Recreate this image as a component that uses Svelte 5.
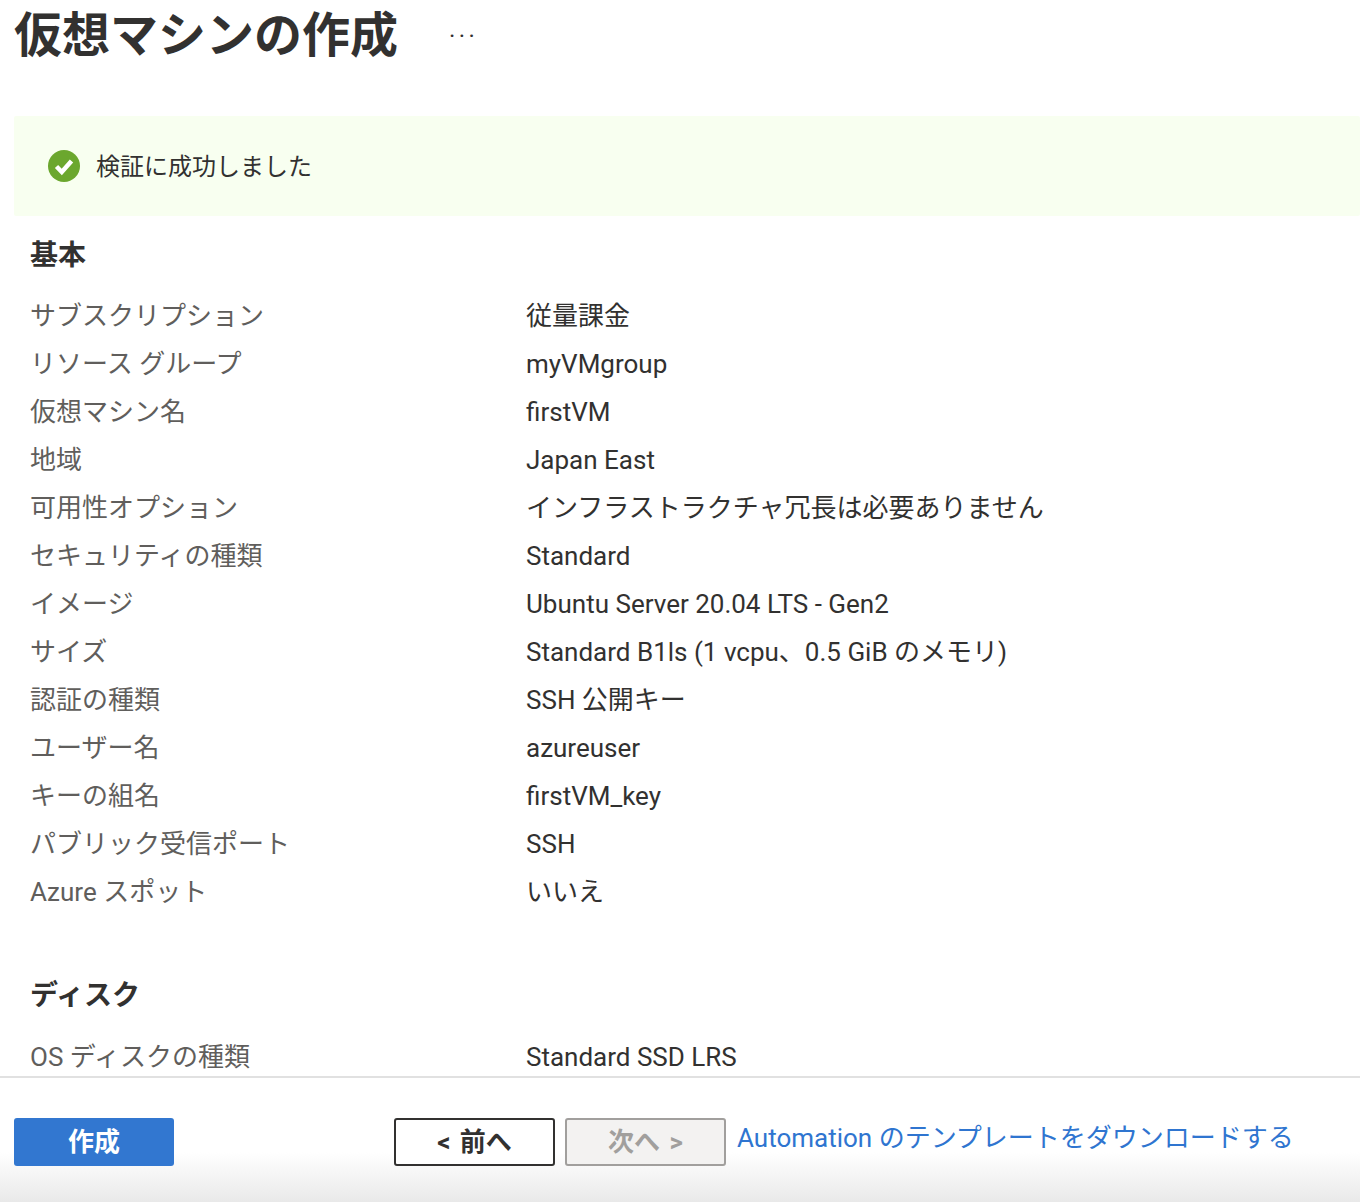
<script>
  const basics = [
    ['サブスクリプション', '従量課金'],
    ['リソース グループ', 'myVMgroup'],
    ['仮想マシン名', 'firstVM'],
    ['地域', 'Japan East'],
    ['可用性オプション', 'インフラストラクチャ冗長は必要ありません'],
    ['セキュリティの種類', 'Standard'],
    ['イメージ', 'Ubuntu Server 20.04 LTS - Gen2'],
    ['サイズ', 'Standard B1ls (1 vcpu、0.5 GiB のメモリ)'],
    ['認証の種類', 'SSH 公開キー'],
    ['ユーザー名', 'azureuser'],
    ['キーの組名', 'firstVM_key'],
    ['パブリック受信ポート', 'SSH'],
    ['Azure スポット', 'いいえ']
  ];
</script>

<div class="page">
  <main class="main">
    <header class="head">
      <h1>仮想マシンの作成</h1>
      <span class="more">···</span>
    </header>
    <div class="banner">
      <svg class="ok" viewBox="0 0 32 32" width="32" height="32" aria-hidden="true">
        <circle cx="16" cy="16" r="16" fill="#6ba72e" />
        <path d="M8.5 16.5 L13.8 22 L23.5 11" fill="none" stroke="#fff" stroke-width="4.5" />
      </svg>
      <span>検証に成功しました</span>
    </div>
    <section class="sec">
      <h2>基本</h2>
      <dl>
        {#each basics as [k, v]}
          <div class="row"><dt>{k}</dt><dd>{v}</dd></div>
        {/each}
      </dl>
    </section>
    <section class="sec disk">
      <h2>ディスク</h2>
      <dl>
        <div class="row"><dt>OS ディスクの種類</dt><dd>Standard SSD LRS</dd></div>
      </dl>
    </section>
  </main>
  <footer class="foot">
    <button class="btn primary">作成</button>
    <button class="btn prev">&lt; 前へ</button>
    <button class="btn next" disabled>次へ &gt;</button>
    <a class="link" href="#top">Automation のテンプレートをダウンロードする</a>
  </footer>
</div>

<style>
  :global(body) {
    margin: 0;
    background: #fff;
  }
  .page {
    height: 1202px;
    width: 1360px;
    display: flex;
    flex-direction: column;
    overflow: hidden;
    font-family: Roboto, "Noto Sans CJK JP", sans-serif;
    color: #323130;
  }
  .main {
    height: 1076px;
    overflow: hidden;
    padding-left: 14px;
    flex: none;
  }
  .head {
    height: 116px;
    display: flex;
    align-items: flex-start;
  }
  h1 {
    margin: 0;
    font-size: 48px;
    line-height: 62px;
    font-weight: 700;
    font-family: "Noto Sans CJK JP", sans-serif;
    color: #323130;
  }
  .more {
    margin-left: 51px;
    margin-top: 16px;
    font-size: 24px;
    line-height: 40px;
    letter-spacing: 3.5px;
    color: #323130;
  }
  .banner {
    height: 100px;
    background: #f8fff0;
    display: flex;
    align-items: center;
    gap: 16px;
    padding-left: 34px;
    font-size: 24px;
    line-height: 34px;
    border-radius: 2px;
    font-family: "Noto Sans CJK JP", sans-serif;
  }
  .banner span {
    margin-top: -2px;
  }
  .sec {
    padding-left: 16px;
  }
  h2 {
    margin: 18px 0 0;
    font-size: 28px;
    line-height: 38px;
    font-weight: 700;
    font-family: "Noto Sans CJK JP", sans-serif;
  }
  dl {
    margin: 20px 0 0;
  }
  .row {
    display: grid;
    grid-template-columns: 496px 1fr;
    height: 48px;
    align-items: center;
    font-size: 26px;
    line-height: 48px;
  }
  dt {
    color: #605e5c;
  }
  dd {
    margin: 0;
  }
  .disk h2 {
    margin-top: 58px;
  }
  .disk dl {
    margin-top: 21px;
  }
  .foot {
    flex: 1;
    border-top: 2px solid #e1e1e1;
    background: linear-gradient(to bottom, #fff 0, #fff 60%, #e9e9e9 100%);
    display: flex;
    align-items: flex-start;
    padding: 40px 0 0 14px;
  }
  .btn {
    width: 161px;
    height: 48px;
    border-radius: 3px;
    font: inherit;
    font-size: 26px;
    font-weight: 700;
    word-spacing: 3px;
    padding: 0;
    box-sizing: border-box;
    background: #fff;
    line-height: 1;
  }
  .primary {
    width: 160px;
    background: #3277d0;
    border: none;
    color: #fff;
    margin-right: 220px;
  }
  .prev {
    border: 2px solid #323130;
    color: #323130;
    margin-right: 10px;
  }
  .next {
    border: 2px solid #a19f9d;
    background: #f3f2f1;
    color: #a19f9d;
    margin-right: 11px;
  }
  .link {
    font-size: 26px;
    line-height: 38px;
    margin-top: 1px;
    color: #2f75d0;
    text-decoration: none;
  }
</style>
